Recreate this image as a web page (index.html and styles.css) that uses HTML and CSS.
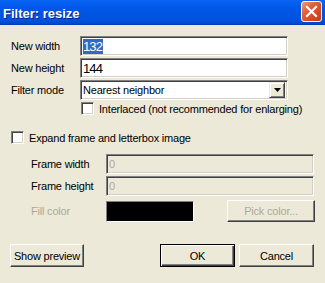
FILE: index.html
```html
<!DOCTYPE html>
<html lang="en">

<head>
    <meta charset="UTF-8">
    <title>Filter: resize</title>
    <link rel="stylesheet" href="styles.css">
</head>

<body>
    <div class="window">
        <div class="titlebar">
            <span class="title">Filter: resize</span>
            <span class="close">
                <svg width="13" height="13" viewBox="0 0 13 13">
                    <path d="M2 2 L11 11 M11 2 L2 11" stroke="#fff" stroke-width="2.2" stroke-linecap="square" />
                </svg>
            </span>
        </div>
        <div class="dlg">
            <div class="row">
                <span class="lbl">New width</span>
                <div class="edit num"><span class="hl">132</span></div>
            </div>
            <div class="row">
                <span class="lbl">New height</span>
                <div class="edit num">144</div>
            </div>
            <div class="row">
                <span class="lbl">Filter mode</span>
                <div class="edit combo">
                    <span>Nearest neighbor</span>
                    <span class="drop">
                        <svg width="7" height="4" viewBox="0 0 7 4">
                            <path d="M0 0 H7 L3.5 4 Z" fill="#000" />
                        </svg>
                    </span>
                </div>
            </div>
            <div class="check-row indent">
                <span class="box"></span>
                <span>Interlaced (not recommended for enlarging)</span>
            </div>
            <div class="check-row expand">
                <span class="box"></span>
                <span>Expand frame and letterbox image</span>
            </div>
            <div class="sub">
                <div class="row">
                    <span class="lbl2">Frame width</span>
                    <div class="edit off">0</div>
                </div>
                <div class="row">
                    <span class="lbl2">Frame height</span>
                    <div class="edit off">0</div>
                </div>
                <div class="row fill">
                    <span class="lbl2 grey">Fill color</span>
                    <div class="swatch"></div>
                    <div class="btn pick">Pick color...</div>
                </div>
            </div>
            <div class="buttons">
                <div class="btn preview">Show preview</div>
                <div class="right">
                    <div class="btn ok">OK</div>
                    <div class="btn">Cancel</div>
                </div>
            </div>
        </div>
    </div>
</body>

</html>
```

FILE: styles.css
```css
body {
    margin: 0;
    padding: 0;
    background-color: #ece9d8;
    font: normal 11px 'Liberation Sans', Arial, sans-serif;
    letter-spacing: -0.2px;
    color: #000;
}

.window {
    width: 325px;
    height: 283px;
    overflow: hidden;
}

.titlebar {
    display: flex;
    align-items: center;
    justify-content: space-between;
    height: 25px;
    padding: 0 3px 0 3px;
    box-sizing: border-box;
    background: linear-gradient(to bottom, #0a64f0 0%, #0460f2 12%, #0055e5 40%, #0053e0 80%, #0044cc 96%, #003bb4 100%);
}

.title {
    color: #fff;
    font: bold 13px 'Liberation Sans', Arial, sans-serif;
    letter-spacing: 0;
    text-shadow: 1px 1px 0 #0a1e8a;
    padding-top: 1px;
}

.close {
    display: flex;
    align-items: center;
    justify-content: center;
    width: 19px;
    height: 19px;
    margin-top: -2px;
    border: 1px solid #fff;
    border-radius: 3px;
    background: linear-gradient(135deg, #f09a7a 0%, #e0623c 35%, #d34a22 70%, #c13a14 100%);
}

.dlg {
    padding: 11px 0 0 11px;
}

.row {
    display: flex;
    align-items: center;
    height: 20px;
    margin-bottom: 2px;
}

.lbl {
    width: 69px;
}

.edit {
    display: flex;
    align-items: center;
    width: 208px;
    height: 20px;
    box-sizing: border-box;
    padding-left: 2px;
    background: #fff;
    border-top: 1px solid #808080;
    border-left: 1px solid #808080;
    border-right: 1px solid #fff;
    border-bottom: 1px solid #fff;
    box-shadow: inset 1px 1px 0 #404040, inset -1px -1px 0 #d4d0c8;
}

.num {
    font-size: 13px;
    letter-spacing: -0.9px;
}

.hl {
    background: #316ac5;
    color: #fff;
    line-height: 15px;
    padding-right: 1px;
}

.combo {
    justify-content: space-between;
    padding-right: 2px;
}

.drop {
    display: flex;
    align-items: center;
    justify-content: center;
    width: 16px;
    height: 16px;
    box-sizing: border-box;
    background: #ece9d8;
    border-top: 1px solid #ece9d8;
    border-left: 1px solid #ece9d8;
    border-right: 1px solid #404040;
    border-bottom: 1px solid #404040;
    box-shadow: inset 1px 1px 0 #fff, inset -1px -1px 0 #808080;
}

.check-row {
    display: flex;
    align-items: center;
    gap: 5px;
    height: 13px;
}

.indent {
    margin: 2px 0 0 70px;
}

.expand {
    margin-top: 16px;
}

.box {
    width: 13px;
    height: 13px;
    box-sizing: border-box;
    background: #fff;
    border-top: 1px solid #808080;
    border-left: 1px solid #808080;
    border-right: 1px solid #fff;
    border-bottom: 1px solid #fff;
    box-shadow: inset 1px 1px 0 #404040, inset -1px -1px 0 #d4d0c8;
}

.sub {
    padding: 10px 0 0 20px;
}

.lbl2 {
    width: 75px;
}

.grey {
    color: #aca899;
}

.off {
    background: #ece9d8;
    color: #aca899;
}

.fill {
    height: 22px;
    margin-top: 4px;
}

.swatch {
    width: 88px;
    height: 21px;
    box-sizing: border-box;
    background: #000;
    border-top: 1px solid #808080;
    border-left: 1px solid #808080;
    border-right: 1px solid #fff;
    border-bottom: 1px solid #fff;
}

.btn {
    display: flex;
    align-items: center;
    justify-content: center;
    width: 75px;
    height: 23px;
    box-sizing: border-box;
    background: #ece9d8;
    border-top: 1px solid #fff;
    border-left: 1px solid #fff;
    border-right: 1px solid #404040;
    border-bottom: 1px solid #404040;
    box-shadow: inset -1px -1px 0 #808080;
}

.pick {
    width: 88px;
    height: 22px;
    margin-left: 33px;
    color: #aca899;
}

.buttons {
    display: flex;
    justify-content: space-between;
    margin-top: 22px;
    padding-right: 11px;
    margin-left: -1px;
}

.preview {
    width: 74px;
}

.right {
    display: flex;
    gap: 4px;
}

.ok {
    border: 1px solid #000;
    box-shadow: inset 1px 1px 0 #fff, inset -1px -1px 0 #404040, inset -2px -2px 0 #808080;
}
```
